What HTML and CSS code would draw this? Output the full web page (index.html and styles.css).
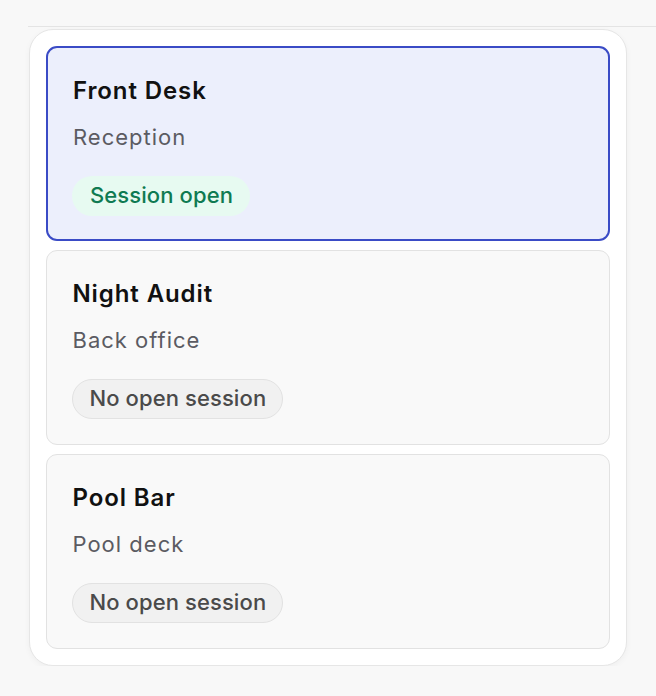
FILE: index.html
```html
<!DOCTYPE html>
<html>
<head>
<meta charset="utf-8">
<link rel="stylesheet" href="styles.css">
</head>
<body>
<div class="topline"></div>
<div class="panel">
  <div class="card active">
    <div class="title">Front Desk</div>
    <div class="sub">Reception</div>
    <div><span class="badge open">Session open</span></div>
  </div>
  <div class="card">
    <div class="title">Night Audit</div>
    <div class="sub">Back office</div>
    <div><span class="badge closed">No open session</span></div>
  </div>
  <div class="card">
    <div class="title">Pool Bar</div>
    <div class="sub">Pool deck</div>
    <div><span class="badge closed">No open session</span></div>
  </div>
</div>
</body>
</html>
```
FILE: styles.css
```css
html, body {
  margin: 0;
  padding: 0;
  background: #f8f8f8;
  font-family: Inter, "Noto Sans", sans-serif;
}
.topline {
  margin-left: 28px;
  margin-top: 26px;
  border-top: 1.5px solid #e4e4e4;
}
.panel {
  margin-left: 29px;
  margin-top: 1.5px;
  width: 598px;
  box-sizing: border-box;
  background: #ffffff;
  border: 1px solid #e6e6e6;
  border-radius: 24px;
  padding: 16px;
  display: flex;
  flex-direction: column;
  gap: 9px;
  box-shadow: 0 2px 6px rgba(0,0,0,0.04);
}
.card {
  height: 195px;
  box-sizing: border-box;
  border: 1.5px solid #e2e2e2;
  border-radius: 11px;
  background: #f9f9f9;
  padding: 28.5px 25px 0 25.5px;
  display: flex;
  flex-direction: column;
}
.card.active {
  background: #eceffc;
  border: 2px solid #3a4bc6;
  padding: 28px 24px 0 25px;
}
.title {
  font-size: 24px;
  font-weight: 600;
  color: #111111;
  line-height: 30px;
  letter-spacing: 0.9px;
}
.sub {
  font-size: 22px;
  color: #5b5b62;
  line-height: 30px;
  margin-top: 16px;
  letter-spacing: 1px;
}
.badge {
  display: inline-block;
  margin-top: 24px;
  margin-left: -1px;
  font-size: 22px;
  font-weight: 460;
  line-height: 36px;
  padding: 0 16px 2px 17px;
  border-radius: 20px;
  letter-spacing: 0.1px;
}
.badge.open {
  background: #e7faf1;
  color: #0f7a52;
  border: 1px solid transparent;
}
.badge.closed {
  background: #f1f1f1;
  color: #4a4a4a;
  border: 1px solid #e2e2e2;
}
```
